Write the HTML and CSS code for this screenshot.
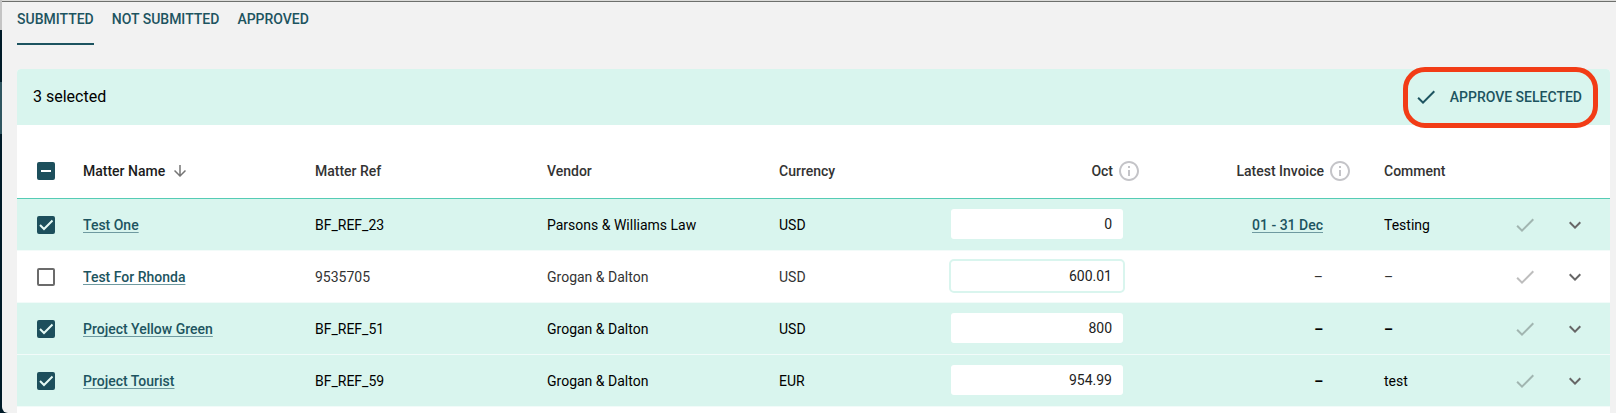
FILE: index.html
```html
<!DOCTYPE html>
<html lang="en">
<head>
  <meta charset="UTF-8">
  <meta name="viewport" content="width=device-width, initial-scale=1.0">
  <title>Accruals</title>
  <link rel="stylesheet" href="styles.css">
</head>
<body>
  <!-- shared icons -->
  <svg class="sprite" aria-hidden="true">
    <symbol id="icon-check" viewBox="0 0 24 24">
      <path d="M9 16.17 4.83 12l-1.42 1.41L9 19 21 7l-1.41-1.41z"/>
    </symbol>
    <symbol id="icon-chevron" viewBox="0 0 24 24">
      <path d="M7.41 8.59 12 13.17l4.59-4.58L18 10l-6 6-6-6z"/>
    </symbol>
    <symbol id="icon-arrow" viewBox="0 0 24 24">
      <path d="m20 12-1.41-1.41L13 16.17V4h-2v12.17l-5.58-5.59L4 12l8 8z"/>
    </symbol>
    <symbol id="icon-info" viewBox="0 0 24 24">
      <path d="M11 7h2v2h-2zm0 4h2v6h-2zm1-9C6.48 2 2 6.48 2 12s4.48 10 10 10 10-4.48 10-10S17.52 2 12 2zm0 18c-4.41 0-8-3.59-8-8s3.59-8 8-8 8 3.59 8 8-3.59 8-8 8z"/>
    </symbol>
  </svg>

  <div class="app">
    <div class="side"></div>
    <main class="main">
      <nav class="tabs">
        <a class="tab active" href="#submitted">SUBMITTED</a>
        <a class="tab" href="#not-submitted">NOT SUBMITTED</a>
        <a class="tab" href="#approved">APPROVED</a>
      </nav>

      <section class="card">
        <div class="selection-bar">
          <span>3 selected</span>
          <button type="button" class="approve">
            <svg class="icon"><use href="#icon-check"/></svg>
            APPROVE SELECTED
          </button>
          <div class="highlight"></div>
        </div>

        <table class="matters">
          <colgroup>
            <col class="col-select">
            <col>
            <col>
            <col>
            <col class="col-currency">
            <col class="col-amount">
            <col class="col-invoice">
            <col class="col-comment">
            <col class="col-approve">
            <col class="col-expand">
          </colgroup>
          <thead>
            <tr>
              <th class="select"><input type="checkbox" class="mixed" aria-label="Select all"></th>
              <th class="sorted"><span class="head">Matter Name <svg class="arrow"><use href="#icon-arrow"/></svg></span></th>
              <th>Matter Ref</th>
              <th>Vendor</th>
              <th>Currency</th>
              <th class="amount"><span class="head">Oct <svg class="info"><use href="#icon-info"/></svg></span></th>
              <th class="invoice"><span class="head">Latest Invoice <svg class="info"><use href="#icon-info"/></svg></span></th>
              <th>Comment</th>
              <th></th>
              <th></th>
            </tr>
          </thead>
          <tbody>
            <tr class="selected">
              <td class="select"><input type="checkbox" aria-label="Select Test One" checked></td>
              <td><a href="#">Test One</a></td>
              <td>BF_REF_23</td>
              <td>Parsons &amp; Williams Law</td>
              <td>USD</td>
              <td class="amount"><input type="text" aria-label="Oct amount, Test One" value="0"></td>
              <td class="invoice"><a href="#">01 - 31 Dec</a></td>
              <td>Testing</td>
              <td class="action"><button type="button" class="row-approve" aria-label="Approve"><svg class="icon"><use href="#icon-check"/></svg></button></td>
              <td class="action expand"><button type="button" aria-label="Expand"><svg class="icon"><use href="#icon-chevron"/></svg></button></td>
            </tr>
            <tr>
              <td class="select"><input type="checkbox" aria-label="Select Test For Rhonda"></td>
              <td><a href="#">Test For Rhonda</a></td>
              <td>9535705</td>
              <td>Grogan &amp; Dalton</td>
              <td>USD</td>
              <td class="amount"><input type="text" aria-label="Oct amount, Test For Rhonda" value="600.01"></td>
              <td class="invoice">–</td>
              <td>–</td>
              <td class="action"><button type="button" class="row-approve" aria-label="Approve"><svg class="icon"><use href="#icon-check"/></svg></button></td>
              <td class="action expand"><button type="button" aria-label="Expand"><svg class="icon"><use href="#icon-chevron"/></svg></button></td>
            </tr>
            <tr class="selected">
              <td class="select"><input type="checkbox" aria-label="Select Project Yellow Green" checked></td>
              <td><a href="#">Project Yellow Green</a></td>
              <td>BF_REF_51</td>
              <td>Grogan &amp; Dalton</td>
              <td>USD</td>
              <td class="amount"><input type="text" aria-label="Oct amount, Project Yellow Green" value="800"></td>
              <td class="invoice"><b>–</b></td>
              <td><b>–</b></td>
              <td class="action"><button type="button" class="row-approve" aria-label="Approve"><svg class="icon"><use href="#icon-check"/></svg></button></td>
              <td class="action expand"><button type="button" aria-label="Expand"><svg class="icon"><use href="#icon-chevron"/></svg></button></td>
            </tr>
            <tr class="selected">
              <td class="select"><input type="checkbox" aria-label="Select Project Tourist" checked></td>
              <td><a href="#">Project Tourist</a></td>
              <td>BF_REF_59</td>
              <td>Grogan &amp; Dalton</td>
              <td>EUR</td>
              <td class="amount"><input type="text" aria-label="Oct amount, Project Tourist" value="954.99"></td>
              <td class="invoice"><b>–</b></td>
              <td>test</td>
              <td class="action"><button type="button" class="row-approve" aria-label="Approve"><svg class="icon"><use href="#icon-check"/></svg></button></td>
              <td class="action expand"><button type="button" aria-label="Expand"><svg class="icon"><use href="#icon-chevron"/></svg></button></td>
            </tr>
          </tbody>
        </table>
      </section>
    </main>
  </div>

  <script>
    // indeterminate can't be set from markup
    document.querySelector('.mixed').indeterminate = true;
  </script>
</body>
</html>
```
FILE: styles.css
```css
* {
  box-sizing: border-box;
}
body {
  margin: 0;
  font-family: Roboto, Arial, sans-serif;
  font-size: 14px;
  line-height: 20px;
  color: #000;
  background: #001b28;
}
button, input {
  font: inherit;
  margin: 0;
}
button {
  padding: 0;
  border: none;
  background: none;
  cursor: pointer;
}
svg {
  display: block;
  fill: currentColor;
}
.sprite {
  display: none;
}
.icon {
  width: 24px;
  height: 24px;
}

.app {
  display: flex;
  height: 100vh;
  overflow: hidden;
}
.side {
  flex: none;
  width: 2px;
  background: linear-gradient(#c4c4c4 30px, #001b28 30px, #001b28 82px, #2f5560 82px, #2f5560 134px, #001b28 134px);
}
.main {
  flex: 1;
  min-width: 0;
  padding: 0 6px 0 15px;
  background: linear-gradient(#dcdcda 1px, #6e706d 1px, #6e706d 2px, #f2f2f2 2px);
  border-bottom-left-radius: 6px;
}

.tabs {
  display: flex;
  gap: 18px;
  margin-bottom: 24px;
}
.tab {
  padding: 9px 0 14px;
  border-bottom: 2px solid transparent;
  color: #1d5460;
  font-weight: 500;
  text-decoration: none;
}
.tab.active {
  border-color: #1d5460;
}

.card {
  min-height: 100%;
  background: #fff;
  border-radius: 4px;
}
.selection-bar {
  position: relative;
  display: flex;
  align-items: center;
  justify-content: space-between;
  height: 56px;
  padding: 0 28px 0 16px;
  font-size: 16px;
  background: #d9f5ee;
  border-radius: 4px 4px 0 0;
}
.approve {
  display: flex;
  align-items: center;
  gap: 12px;
  color: #1d5460;
  font-size: 14px;
  font-weight: 500;
}
/* red call-out ring round the button */
.highlight {
  position: absolute;
  top: -2px;
  right: 12px;
  bottom: -3px;
  width: 195px;
  border: 5px solid #f23c16;
  border-radius: 22px;
  pointer-events: none;
}

.matters {
  width: 100%;
  table-layout: fixed;
  border-collapse: separate;
  border-spacing: 0;
}
.col-select { width: 66px; }
.col-currency { width: 170px; }
.col-amount { width: 190px; }
.col-invoice { width: 245px; }
.col-comment { width: 117px; }
.col-approve { width: 48px; }
.col-expand { width: 61px; }

th, td {
  padding: 0;
  text-align: left;
  vertical-align: middle;
  white-space: nowrap;
}
th {
  height: 74px;
  padding-top: 18px;
  border-bottom: 1px solid #55ccb5;
  color: #333;
  font-weight: 500;
}
th.sorted {
  color: #1c1c1c;
}
td {
  height: 52px;
  border-bottom: 1px solid #f2fbf9;
  color: #333;
}
.selected td {
  color: #000;
  background: #d9f5ee;
}
td a {
  color: #1d5460;
  font-weight: 500;
  text-decoration: underline 1px #6f9aa0;
  text-decoration-skip-ink: none;
  text-underline-offset: 2px;
}
.head {
  display: inline-flex;
  align-items: center;
  gap: 6px;
  vertical-align: middle;
}
.arrow {
  width: 18px;
  height: 18px;
  color: #757575;
}
.info {
  width: 24px;
  height: 24px;
  margin: -2px;
  color: #c4c4c8;
}
.select {
  padding-left: 20px;
}
.amount, .invoice {
  text-align: right;
}
td.amount {
  padding-right: 14px;
  padding-bottom: 1px;
}
th.invoice {
  padding-right: 34px;
}
td.invoice {
  padding-right: 61px;
}

input[type="checkbox"] {
  display: block;
  appearance: none;
  width: 18px;
  height: 18px;
  border: 2px solid #6b6b6b;
  border-radius: 2px;
  background: #fff center / 18px no-repeat;
}
input[type="checkbox"]:checked,
input[type="checkbox"]:indeterminate {
  border-color: #1d4f5c;
  background-color: #1d4f5c;
}
input[type="checkbox"]:checked {
  background-image: url("data:image/svg+xml,%3Csvg xmlns='http://www.w3.org/2000/svg' viewBox='0 0 18 18'%3E%3Cpath d='M3 9l4 4 8.500-8.500' fill='none' stroke='%23e6faf5' stroke-width='2'/%3E%3C/svg%3E");
}
input[type="checkbox"]:indeterminate {
  background-image: url("data:image/svg+xml,%3Csvg xmlns='http://www.w3.org/2000/svg' viewBox='0 0 18 18'%3E%3Cpath d='M4 9h10' stroke='%23fff' stroke-width='2'/%3E%3C/svg%3E");
}
input[type="text"] {
  display: block;
  width: 100%;
  height: 34px;
  padding: 0 11px;
  border: 2px solid #d9f5ee;
  border-radius: 5px;
  color: #222;
  text-align: right;
  background: #fff;
}

.action button {
  display: block;
  margin: 0 auto;
  color: #666;
}
.action .row-approve {
  color: rgba(0, 0, 0, 0.26);
}
.expand {
  padding-right: 9px;
}
```
